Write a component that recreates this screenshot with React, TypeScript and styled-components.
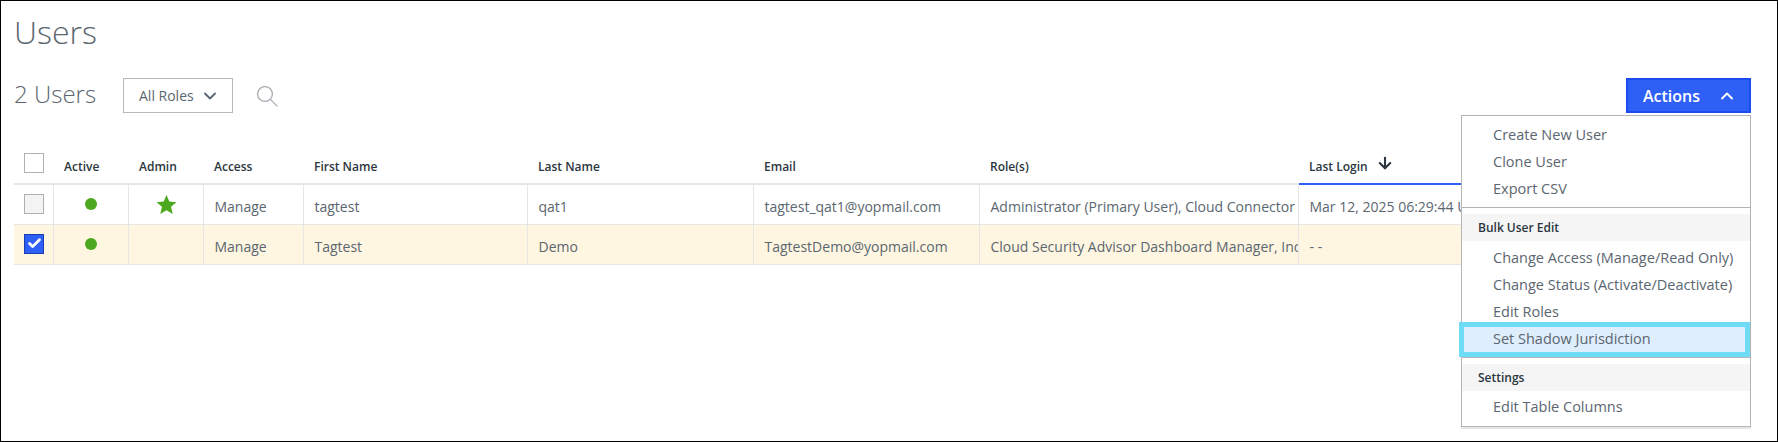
import React from "react";
import styled, { createGlobalStyle } from "styled-components";
import { ChevronDown, ChevronUp, ArrowDown, Check } from "lucide-react";

const Global = createGlobalStyle`
  html, body { margin: 0; padding: 0; background: #fff; }
  * { box-sizing: border-box; }
`;

const Frame = styled.div`
  position: relative;
  width: 1778px;
  height: 442px;
  border: 1px solid #000;
  overflow: hidden;
  font-family: "Open Sans", "Liberation Sans", sans-serif;
  color: #5b6670;
  padding: 0 26px 0 13px;
`;

const Title = styled.h1`
  margin: 0;
  height: 61px;
  padding-top: 9px;
  font-size: 32px;
  line-height: 44px;
  font-weight: 300;
  color: #5b6670;
`;

const Toolbar = styled.div`
  display: flex;
  align-items: center;
  height: 35px;
  margin-top: 16px;
`;

const Count = styled.div`
  font-size: 24px;
  font-weight: 300;
  line-height: 36px;
  width: 109px;
  margin-top: -4px;
`;

const RoleSelect = styled.button`
  display: flex;
  align-items: center;
  gap: 6px;
  width: 110px;
  height: 35px;
  padding: 0 0 0 15px;
  background: #fff;
  border: 1px solid #b2b8bd;
  font: 400 14px "Open Sans", sans-serif;
  color: #5b6670;
`;

const SearchIcon = styled.svg`
  margin: 2px 0 0 24px;
  color: #a9aeb3;
`;

const ActionsButton = styled.button`
  display: flex;
  align-items: center;
  margin-left: auto;
  width: 125px;
  height: 35px;
  padding: 0 0 0 15px;
  background: #2f60f6;
  border: 2px solid #1a4cf0;
  color: #fff;
  font: 600 16px "Open Sans", sans-serif;
  gap: 17px;
`;

const Table = styled.table`
  margin-top: 26px;
  width: 1737px;
  border-collapse: collapse;
  table-layout: fixed;
`;

const HeaderCell = styled.th<{ $sorted?: boolean }>`
  height: 45px;
  padding: 0 0 8px 11px;
  text-align: left;
  font-size: 12px;
  font-weight: 600;
  color: #2b3640;
  border-bottom: 2px solid ${(p) => (p.$sorted ? "#2f60f6" : "#e6e6e6")};
  white-space: nowrap;
  vertical-align: bottom;
  line-height: 17px;
`;

const CheckHeader = styled(HeaderCell)`
  padding: 0 0 10px 10px;
`;

const Row = styled.tr<{ $selected?: boolean }>`
  height: 40px;
  background: ${(p) => (p.$selected ? "#fef6e1" : "#fff")};
`;

const Cell = styled.td`
  padding: 4px 0 0 11px;
  font-size: 14px;
  line-height: 19px;
  color: #5b6670;
  border: 1px solid #e6e6e6;
  border-top: 0;
  white-space: nowrap;
  overflow: hidden;
  &:first-child { border-left: 0; }
  &:last-child { border-right: 0; }
`;

const IconCell = styled(Cell)`
  padding: 0;
  text-align: center;
  vertical-align: top;
`;

const CheckCell = styled(Cell)`
  padding: 9px 0 0 10px;
  vertical-align: top;
`;

const Box = styled.span<{ $state: "empty" | "off" | "on" }>`
  display: flex;
  align-items: center;
  justify-content: center;
  width: 20px;
  height: 20px;
  border: 1px solid ${(p) => (p.$state === "on" ? "#1b3cb0" : "#acb1b5")};
  background: ${(p) => (p.$state === "on" ? "#2f60f6" : p.$state === "off" ? "#f3f3f3" : "#fff")};
  color: #fff;
`;

const Dot = styled.span`
  display: inline-block;
  width: 12px;
  height: 12px;
  margin-top: 13px;
  border-radius: 50%;
  background: #4ca91f;
`;

const StarIcon = styled.svg`
  display: inline-block;
  margin: 9px 0 0 2px;
`;

const SortArrow = styled(ArrowDown)`
  margin-left: 8px;
  vertical-align: -1px;
  color: #2b3640;
`;

const Menu = styled.div`
  position: absolute;
  left: 1460px;
  top: 114px;
  width: 290px;
  height: 312px;
  padding-top: 5px;
  background: #fff;
  border: 1px solid #b4b4b4;
  box-shadow: 0 2px 0 #e4e6e8;
`;

const MenuItem = styled.div`
  height: 27px;
  padding-left: 31px;
  font-size: 14.5px;
  line-height: 27px;
  color: #5b6670;
  white-space: nowrap;
`;

const Divider = styled.div`
  height: 1px;
  margin-top: 5px;
  background: #b4b4b4;
`;

const Section = styled.div`
  height: 27px;
  margin: 6px 0 3px;
  padding-left: 16px;
  background: #f5f5f5;
  font-size: 12px;
  font-weight: 600;
  line-height: 27px;
  color: #2b3640;
`;

const LastSection = styled(Section)`
  margin-bottom: 2px;
`;

const Highlighted = styled.div`
  position: relative;
  height: 27px;
`;

const HighlightBox = styled.div`
  position: absolute;
  left: -3px;
  right: 0;
  top: -3px;
  height: 35px;
  padding-left: 29px;
  border: 5px solid #6edcf6;
  background: #dfeefc;
  font-size: 14.5px;
  line-height: 24px;
  color: #5b6670;
  white-space: nowrap;
`;

const columns = [39, 75, 75, 100, 224, 226, 226, 319, 453];

const users = [
  {
    state: "off" as const,
    admin: true,
    access: "Manage",
    first: "tagtest",
    last: "qat1",
    email: "tagtest_qat1@yopmail.com",
    roles: "Administrator (Primary User), Cloud Connector",
    login: "Mar 12, 2025 06:29:44 UTC",
  },
  {
    state: "on" as const,
    admin: false,
    access: "Manage",
    first: "Tagtest",
    last: "Demo",
    email: "TagtestDemo@yopmail.com",
    roles: "Cloud Security Advisor Dashboard Manager, Inc",
    login: "- -",
  },
];

export default function App() {
  return (
    <Frame>
      <Global />
      <Title>Users</Title>
      <Toolbar>
        <Count>2 Users</Count>
        <RoleSelect>
          All Roles
          <ChevronDown size={20} strokeWidth={2.2} />
        </RoleSelect>
        <SearchIcon width="21" height="21" viewBox="0 0 21 21" fill="none" stroke="currentColor" strokeWidth="1.3">
          <circle cx="8" cy="8" r="7.4" />
          <line x1="13.4" y1="13.4" x2="20.4" y2="20.4" />
        </SearchIcon>
        <ActionsButton>
          Actions
          <ChevronUp size={20} strokeWidth={2.2} />
        </ActionsButton>
      </Toolbar>
      <Table>
        <colgroup>
          {columns.map((w, i) => (
            <col key={i} style={{ width: w }} />
          ))}
        </colgroup>
        <thead>
          <tr>
            <CheckHeader>
              <Box $state="empty" />
            </CheckHeader>
            <HeaderCell>Active</HeaderCell>
            <HeaderCell>Admin</HeaderCell>
            <HeaderCell>Access</HeaderCell>
            <HeaderCell>First Name</HeaderCell>
            <HeaderCell>Last Name</HeaderCell>
            <HeaderCell>Email</HeaderCell>
            <HeaderCell>Role(s)</HeaderCell>
            <HeaderCell $sorted>
              Last Login
              <SortArrow size={18} strokeWidth={2.8} />
            </HeaderCell>
          </tr>
        </thead>
        <tbody>
          {users.map((u) => (
            <Row key={u.email} $selected={u.state === "on"}>
              <CheckCell>
                <Box $state={u.state}>{u.state === "on" && <Check size={15} strokeWidth={4.5} />}</Box>
              </CheckCell>
              <IconCell>
                <Dot />
              </IconCell>
              <IconCell>
                {u.admin && (
                  <StarIcon width="21" height="21" viewBox="0 0 24 24">
                    <polygon
                      points="12,1 15.2,8.6 23.4,9.3 17.2,14.7 19.1,22.8 12,18.5 4.9,22.8 6.8,14.7 0.6,9.3 8.8,8.6"
                      fill="#4ca91f"
                    />
                  </StarIcon>
                )}
              </IconCell>
              <Cell>{u.access}</Cell>
              <Cell>{u.first}</Cell>
              <Cell>{u.last}</Cell>
              <Cell>{u.email}</Cell>
              <Cell>{u.roles}</Cell>
              <Cell>{u.login}</Cell>
            </Row>
          ))}
        </tbody>
      </Table>
      <Menu>
        <MenuItem>Create New User</MenuItem>
        <MenuItem>Clone User</MenuItem>
        <MenuItem>Export CSV</MenuItem>
        <Divider />
        <Section>Bulk User Edit</Section>
        <MenuItem>Change Access (Manage/Read Only)</MenuItem>
        <MenuItem>Change Status (Activate/Deactivate)</MenuItem>
        <MenuItem>Edit Roles</MenuItem>
        <Highlighted>
          <HighlightBox>Set Shadow Jurisdiction</HighlightBox>
        </Highlighted>
        <Divider />
        <LastSection>Settings</LastSection>
        <MenuItem>Edit Table Columns</MenuItem>
      </Menu>
    </Frame>
  );
}
